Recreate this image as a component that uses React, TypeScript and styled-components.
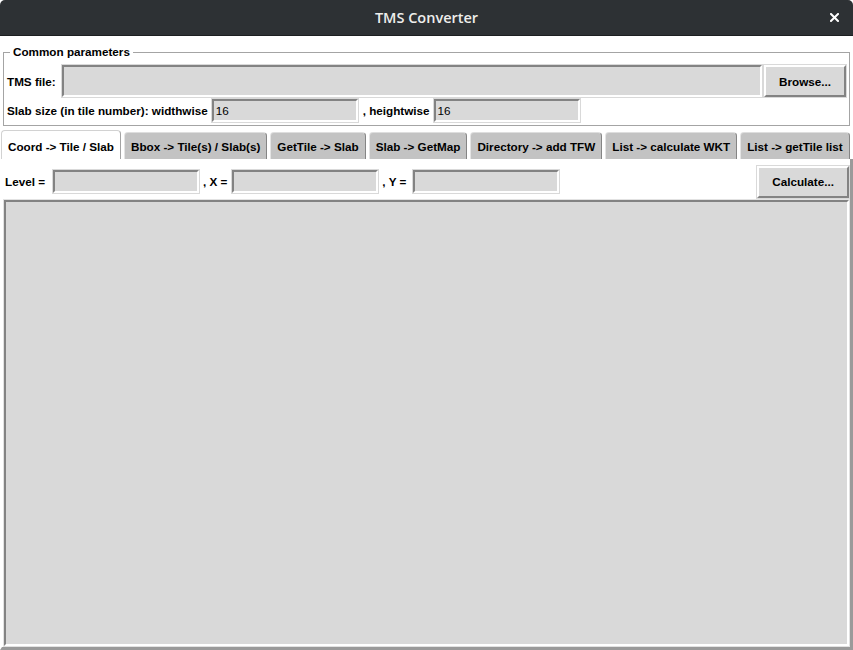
import React from "react";
import styled, { createGlobalStyle } from "styled-components";

const Global = createGlobalStyle`
  html, body { margin: 0; padding: 0; background: #ffffff; }
  body {
    font-family: "Liberation Sans", Arial, sans-serif;
    font-size: 11.7px;
    color: #000;
  }
  * { box-sizing: border-box; }
`;

const Window = styled.div`
  width: 853px;
  height: 650px;
  display: flex;
  flex-direction: column;
  background: #ffffff;
  overflow: hidden;
`;

const TitleBar = styled.div`
  height: 36px;
  flex: none;
  background: #2d3134;
  border-bottom: 1px solid #1c1f21;
  border-radius: 5px 5px 0 0;
  display: grid;
  grid-template-columns: 1fr auto 1fr;
  align-items: center;
`;

const Title = styled.div`
  grid-column: 2;
  font-family: "Open Sans", "Noto Sans", sans-serif;
  font-size: 14.5px;
  font-weight: 600;
  color: #eeeeec;
`;

const CloseBox = styled.div`
  grid-column: 3;
  justify-self: end;
  margin-right: 14px;
  width: 9px;
  height: 9px;
  display: flex;
`;

const Fieldset = styled.fieldset`
  margin: 8px 3px 0 3px;
  padding: 4px 2px 2px 2px;
  border: 1px solid #a4a4a4;
  min-width: 0;
  flex: none;
  display: flex;
  flex-direction: column;
`;

const Legend = styled.legend`
  margin-left: 4px;
  padding: 0 3px;
  font-weight: 700;
  font-size: 11.7px;
  line-height: 16px;
`;

const Row = styled.div<{ $h: number }>`
  display: flex;
  align-items: center;
  flex: none;
  height: ${(p) => p.$h}px;
`;

const Label = styled.span<{ $pl?: number; $pr?: number }>`
  font-weight: 700;
  font-size: 11.7px;
  white-space: nowrap;
  padding-left: ${(p) => p.$pl ?? 1}px;
  padding-right: ${(p) => p.$pr ?? 4}px;
`;

const Entry = styled.input<{ $w?: number; $fill?: boolean }>`
  margin: 1px;
  outline: 1px solid #d9d9d9;
  border: 2px solid;
  border-color: #838383 #ffffff #ffffff #838383;
  background: #d9d9d9;
  height: ${(p) => (p.$fill ? 32 : 23)}px;
  width: ${(p) => (p.$w ? `${p.$w}px` : "auto")};
  flex: ${(p) => (p.$fill ? "1 1 auto" : "none")};
  min-width: 0;
  padding: 0 2px;
  font-family: "Liberation Sans", Arial, sans-serif;
  font-size: 11.7px;
  color: #000;
`;

const Button = styled.button`
  margin: 1px;
  outline: 1px solid #d9d9d9;
  border: 2px solid;
  border-color: #ffffff #838383 #838383 #ffffff;
  background: #d9d9d9;
  height: 32px;
  padding: 0 13px;
  font-family: "Liberation Sans", Arial, sans-serif;
  font-weight: 700;
  font-size: 11.7px;
  color: #000;
  flex: none;
  cursor: default;
`;

const TabBar = styled.div`
  margin-top: 4px;
  height: 29px;
  flex: none;
  display: flex;
  align-items: flex-end;
  gap: 3px;
  padding-left: 1px;
`;

const Tab = styled.div<{ $active?: boolean }>`
  height: ${(p) => (p.$active ? 29 : 27)}px;
  padding: ${(p) => (p.$active ? "2px 6px 0 6px" : "0 6px")};
  display: flex;
  align-items: center;
  font-weight: 700;
  font-size: 11.7px;
  white-space: nowrap;
  border-radius: 4px 4px 0 0;
  border-style: solid;
  border-width: 1px 1px 0 1px;
  border-color: ${(p) =>
    p.$active ? "#d2d2d2 #a3a3a3 transparent #d2d2d2" : "#dedede #858585 transparent #e4e4e4"};
  background: ${(p) => (p.$active ? "#ffffff" : "#c3c3c3")};
`;

const Pane = styled.div`
  flex: 1 1 auto;
  display: flex;
  flex-direction: column;
  border-style: solid;
  border-width: 0 3px 3px 2px;
  border-color: #ffffff #9a9a9a #9a9a9a #ffffff;
  padding: 5px 0 0 1px;
  min-height: 0;
`;

const Spacer = styled.div`
  flex: 1 1 auto;
`;

const Output = styled.div`
  flex: 1 1 auto;
  margin: 1px;
  outline: 1px solid #e2e2e2;
  border: 2px solid;
  border-color: #838383 #ffffff #ffffff #838383;
  background: #d9d9d9;
`;

const tabs = [
  "Coord -> Tile / Slab",
  "Bbox -> Tile(s) / Slab(s)",
  "GetTile -> Slab",
  "Slab -> GetMap",
  "Directory -> add TFW",
  "List -> calculate WKT",
  "List -> getTile list",
];

export default function App() {
  return (
    <>
      <Global />
      <Window>
        <TitleBar>
          <Title>TMS Converter</Title>
          <CloseBox>
            <svg width="9" height="9" viewBox="0 0 9 9">
              <path d="M1 1 L8 8 M8 1 L1 8" stroke="#ffffff" strokeWidth="2" strokeLinecap="square" />
            </svg>
          </CloseBox>
        </TitleBar>

        <Fieldset>
          <Legend>Common parameters</Legend>
          <Row $h={34}>
            <Label $pr={5}>TMS file:</Label>
            <Entry $fill defaultValue="" />
            <Button>Browse...</Button>
          </Row>
          <Row $h={25}>
            <Label $pr={3}>Slab size (in tile number): widthwise</Label>
            <Entry $w={146} defaultValue="16" />
            <Label $pl={4} $pr={3}>, heightwise</Label>
            <Entry $w={146} defaultValue="16" />
          </Row>
        </Fieldset>

        <TabBar>
          {tabs.map((t, i) => (
            <Tab key={t} $active={i === 0}>
              {t}
            </Tab>
          ))}
        </TabBar>

        <Pane>
          <Row $h={35}>
            <Label $pl={2} $pr={7}>Level =</Label>
            <Entry $w={146} defaultValue="" />
            <Label $pl={3} $pr={4}>, X =</Label>
            <Entry $w={146} defaultValue="" />
            <Label $pl={3} $pr={6}>, Y =</Label>
            <Entry $w={146} defaultValue="" />
            <Spacer />
            <Button>Calculate...</Button>
          </Row>
          <Output />
        </Pane>
      </Window>
    </>
  );
}
